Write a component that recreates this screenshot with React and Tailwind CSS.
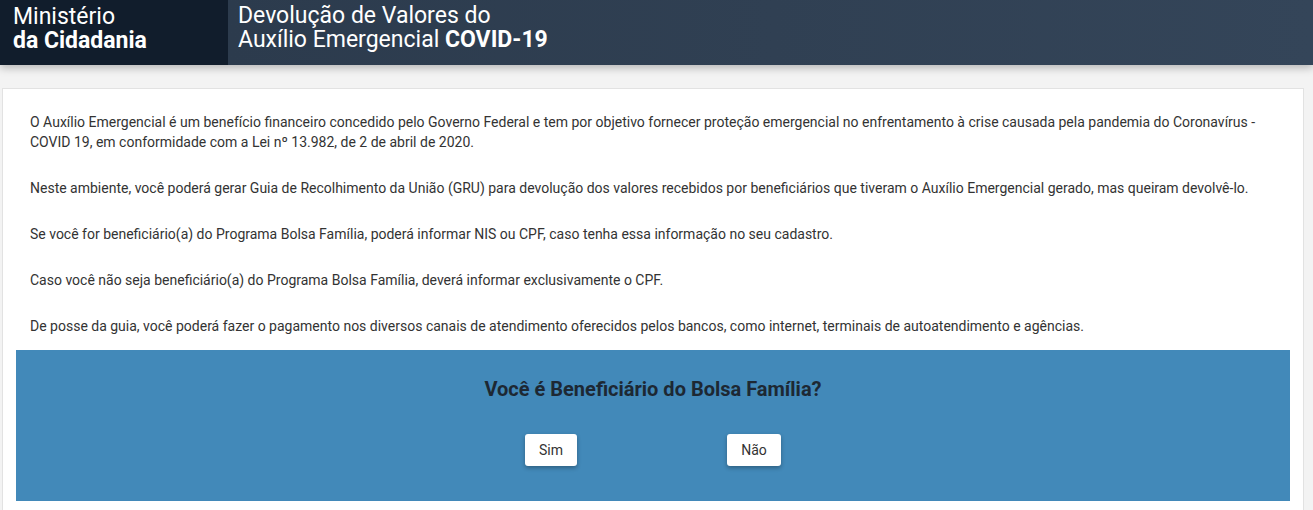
export default function App() {
  const p = "mb-[26px]";
  return (
    <div className="min-h-[510px] bg-[#f3f3f3]" style={{ fontFamily: "Roboto, 'Liberation Sans', sans-serif" }}>
      <header className="relative z-10 flex h-[65px] shadow-[0_3px_8px_rgba(0,0,0,0.25)]">
        <div className="w-[228px] bg-[#111d2c] pl-[13px] pt-[5px] text-[23px] leading-[24px] text-white">
          <div>Ministério</div>
          <div className="font-bold">da Cidadania</div>
        </div>
        <div className="flex-1 bg-gradient-to-r from-[#2c3b4d] to-[#344559] pl-[10px] pt-[4px] text-[23px] leading-[24px] text-white">
          <div>Devolução de Valores do</div>
          <div>
            Auxílio Emergencial <span className="font-bold">COVID-19</span>
          </div>
        </div>
      </header>
      <main className="pt-[23px]">
        <div className="ml-[2px] mr-[9px] border border-[#e2e2e2] bg-white px-[13px] pt-[23px] pb-[40px]">
          <div className="px-[14px] text-[14px] leading-[20px] text-[#333333]">
            <p className={p}>
              O Auxílio Emergencial é um benefício financeiro concedido pelo Governo Federal e tem por objetivo fornecer proteção emergencial no enfrentamento à crise causada pela pandemia do Coronavírus - COVID 19, em conformidade com a Lei nº 13.982, de 2 de abril de 2020.
            </p>
            <p className={p}>
              Neste ambiente, você poderá gerar Guia de Recolhimento da União (GRU) para devolução dos valores recebidos por beneficiários que tiveram o Auxílio Emergencial gerado, mas queiram devolvê-lo.
            </p>
            <p className={p}>
              Se você for beneficiário(a) do Programa Bolsa Família, poderá informar NIS ou CPF, caso tenha essa informação no seu cadastro.
            </p>
            <p className={p}>
              Caso você não seja beneficiário(a) do Programa Bolsa Família, deverá informar exclusivamente o CPF.
            </p>
            <p className="mb-[14px]">
              De posse da guia, você poderá fazer o pagamento nos diversos canais de atendimento oferecidos pelos bancos, como internet, terminais de autoatendimento e agências.
            </p>
          </div>
          <section className="flex h-[151px] flex-col items-center bg-[#4289b9] pt-[25px]">
            <h2 className="text-[20px] font-bold leading-[28px] text-[#1d2833]">
              Você é Beneficiário do Bolsa Família?
            </h2>
            <div className="mt-[31px] flex gap-[150px]">
              <button className="h-[32px] w-[52px] rounded-[3px] bg-white text-[14px] text-[#333] shadow-[0_2px_4px_rgba(0,0,0,0.3)]">
                Sim
              </button>
              <button className="h-[32px] w-[54px] rounded-[3px] bg-white text-[14px] text-[#333] shadow-[0_2px_4px_rgba(0,0,0,0.3)]">
                Não
              </button>
            </div>
          </section>
        </div>
      </main>
    </div>
  );
}
